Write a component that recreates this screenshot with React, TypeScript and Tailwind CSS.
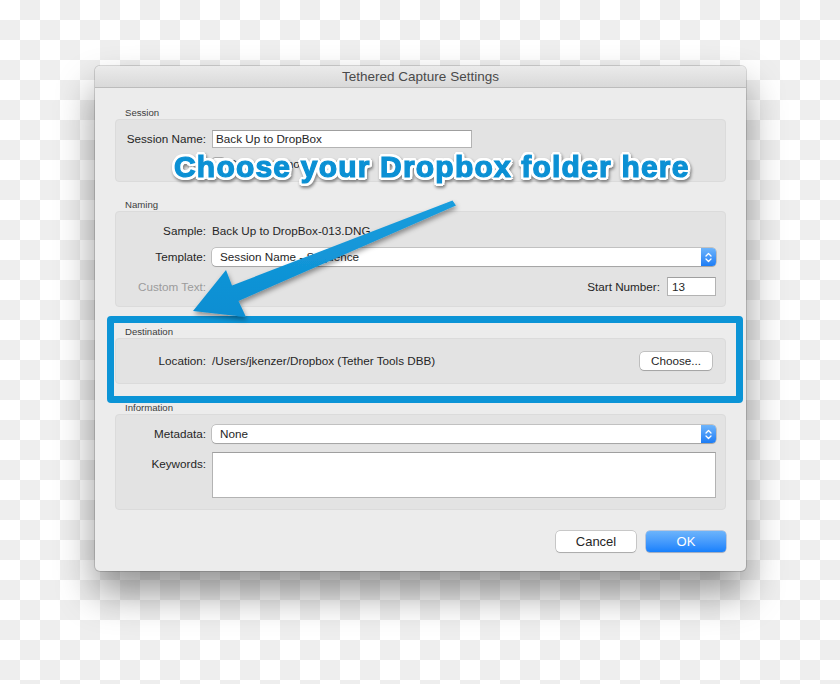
import React from "react";

const Stepper = () => (
  <div className="w-[15px] h-full rounded-r-[4px] bg-linear-to-b from-[#6db4fb] to-[#1a7cf5] flex items-center justify-center">
    <svg width="7" height="11" viewBox="0 0 7 11" fill="none" stroke="white" strokeWidth="1.3" strokeLinecap="round" strokeLinejoin="round">
      <path d="M1 4 L3.5 1.5 L6 4" />
      <path d="M1 7 L3.5 9.5 L6 7" />
    </svg>
  </div>
);

const Select = ({ value }: { value: string }) => (
  <div className="flex-1 h-[18px] flex rounded-[4px] bg-white shadow-[0_0_0_0.5px_rgba(0,0,0,0.3),0_1px_1px_rgba(0,0,0,0.15)]">
    <div className="flex-1 pl-[8px] leading-[18px] text-[#262626]">{value}</div>
    <Stepper />
  </div>
);

const Label = ({ children, muted }: { children: React.ReactNode; muted?: boolean }) => (
  <div className={`w-[90px] shrink-0 text-right ${muted ? "text-[#9b9b9b]" : "text-[#262626]"}`}>{children}</div>
);

interface GroupProps {
  title: string;
  className: string;
  children: React.ReactNode;
}

const Group: React.FC<GroupProps> = ({ title, className, children }) => (
  <div className="flex flex-col">
    <div className="pl-[10px] text-[9.6px] leading-[12px] text-[#3c3c3c]">{title}</div>
    <div className={`rounded-[4px] border border-[#dbdbdb] bg-[#e3e3e3] flex flex-col pr-[9px] ${className}`}>{children}</div>
  </div>
);

export default function App() {
  return (
    <div className="relative w-[840px] h-[684px] overflow-hidden pl-[95px] pt-[66px] [background-image:repeating-conic-gradient(#eeeeee_0_25%,#ffffff_0_50%)] [background-size:40px_40px] font-['Liberation_Sans',Arial,sans-serif] text-[11.7px]">
      <div className="w-[651px] h-[505px] rounded-[5px] bg-[#ececec] shadow-[0_22px_38px_rgba(0,0,0,0.42),0_0_0_1px_rgba(0,0,0,0.14)] flex flex-col">
        <div className="h-[22px] rounded-t-[5px] bg-linear-to-b from-[#ebebeb] to-[#d9d9d9] border-b border-[#bcbcbc] text-center text-[13.5px] leading-[21px] text-[#4a4a4a]">
          Tethered Capture Settings
        </div>

        <div className="flex flex-col px-[20px] pt-[19px]">
          <Group title="Session" className="h-[63px] pt-[10px]">
            <div className="flex items-center h-[18px] gap-[6px]">
              <Label>Session Name:</Label>
              <div className="w-[260px] h-[18px] bg-white border border-[#b3b3b3] border-t-[#9f9f9f] pl-[3px] leading-[16px] text-[#262626]">
                Back Up to DropBox
              </div>
            </div>
            <div className="flex items-center h-[13px] mt-[9px] gap-[4px] pl-[96px]">
              <div className="w-[13px] h-[13px] rounded-[3px] bg-white border border-[#a9a9a9]" />
              <span className="text-[#262626]">Segment Photos By Shots</span>
            </div>
          </Group>

          <div className="mt-[17px]">
            <Group title="Naming" className="h-[96px] pt-[10px]">
              <div className="flex items-center h-[18px] gap-[6px]">
                <Label>Sample:</Label>
                <span className="text-[#262626]">Back Up to DropBox-013.DNG</span>
              </div>
              <div className="flex items-center h-[18px] mt-[8px] gap-[6px]">
                <Label>Template:</Label>
                <Select value="Session Name - Sequence" />
              </div>
              <div className="flex items-center h-[19px] mt-[11px] gap-[6px]">
                <Label muted>Custom Text:</Label>
                <div className="flex-1" />
                <span className="text-[#262626] mr-[1px]">Start Number:</span>
                <div className="w-[49px] h-[19px] bg-white border border-[#b3b3b3] border-t-[#9f9f9f] pl-[4px] leading-[17px] text-[#262626]">
                  13
                </div>
              </div>
            </Group>
          </div>

          <div className="mt-[19px]">
            <Group title="Destination" className="h-[46px] pt-[13px] pr-[13px]">
              <div className="flex items-center h-[18px] gap-[6px]">
                <Label>Location:</Label>
                <span className="flex-1 text-[#262626]">/Users/jkenzer/Dropbox (Tether Tools DBB)</span>
                <button className="w-[72px] h-[18px] rounded-[4px] bg-white shadow-[0_0_0_0.5px_rgba(0,0,0,0.3),0_1px_1px_rgba(0,0,0,0.15)] text-[#262626] leading-[18px]">
                  Choose...
                </button>
              </div>
            </Group>
          </div>

          <div className="mt-[18px]">
            <Group title="Information" className="h-[96px] pt-[10px]">
              <div className="flex items-center h-[18px] gap-[6px]">
                <Label>Metadata:</Label>
                <Select value="None" />
              </div>
              <div className="flex items-start mt-[9px] gap-[6px]">
                <div className="pt-[3px]">
                  <Label>Keywords:</Label>
                </div>
                <div className="flex-1 h-[46px] bg-white border border-[#b3b3b3] border-t-[#9f9f9f]" />
              </div>
            </Group>
          </div>

          <div className="flex justify-end gap-[10px] mt-[21px]">
            <button className="w-[80px] h-[21px] rounded-[4px] bg-white shadow-[0_0_0_0.5px_rgba(0,0,0,0.3),0_1px_1px_rgba(0,0,0,0.15)] text-[13px] text-[#262626]">
              Cancel
            </button>
            <button className="w-[80px] h-[21px] rounded-[4px] bg-linear-to-b from-[#6cb4fb] to-[#1580fc] shadow-[0_0_0_0.5px_rgba(0,60,160,0.4),0_1px_1px_rgba(0,0,0,0.15)] text-[13px] text-white">
              OK
            </button>
          </div>
        </div>
      </div>

      {/* annotation overlay */}
      <div className="absolute left-[107px] top-[316px] w-[636px] h-[87px] border-[7px] border-[#0c94d6] rounded-[4px]" />

      <svg className="absolute left-0 top-0 pointer-events-none" width="840" height="684" viewBox="0 0 840 684">
        <defs>
          <filter id="arrowShadow" x="-20%" y="-20%" width="140%" height="140%">
            <feDropShadow dx="1" dy="3" stdDeviation="2.5" floodColor="#000" floodOpacity="0.4" />
          </filter>
          <linearGradient id="arrowFill" x1="0" y1="0" x2="0" y2="1">
            <stop offset="0" stopColor="#1a9ddd" />
            <stop offset="1" stopColor="#0a8ed2" />
          </linearGradient>
        </defs>
        <polygon
          points="452.5,200.5 232,285.5 226,270 193,311 246,317 238.5,301 456,205.5"
          fill="url(#arrowFill)"
          strokeLinejoin="round"
          filter="url(#arrowShadow)"
        />
      </svg>

      <div className="absolute left-[174px] top-[152px] whitespace-nowrap font-['Liberation_Sans',Arial,sans-serif] font-bold text-[30px] leading-[30px] tracking-[1.2px] text-[#0b90d4] [-webkit-text-stroke:1.2px_#0b90d4] [text-shadow:3px_0_0_#fff,-3px_0_0_#fff,0_3px_0_#fff,0_-3px_0_#fff,2px_2px_0_#fff,-2px_2px_0_#fff,2px_-2px_0_#fff,-2px_-2px_0_#fff,3px_1.5px_0_#fff,-3px_1.5px_0_#fff,3px_-1.5px_0_#fff,-3px_-1.5px_0_#fff,1.5px_3px_0_#fff,-1.5px_3px_0_#fff,1.5px_-3px_0_#fff,-1.5px_-3px_0_#fff] [filter:drop-shadow(1px_2px_1.5px_rgba(0,0,0,0.45))]">
        Choose your Dropbox folder here
      </div>
    </div>
  );
}
